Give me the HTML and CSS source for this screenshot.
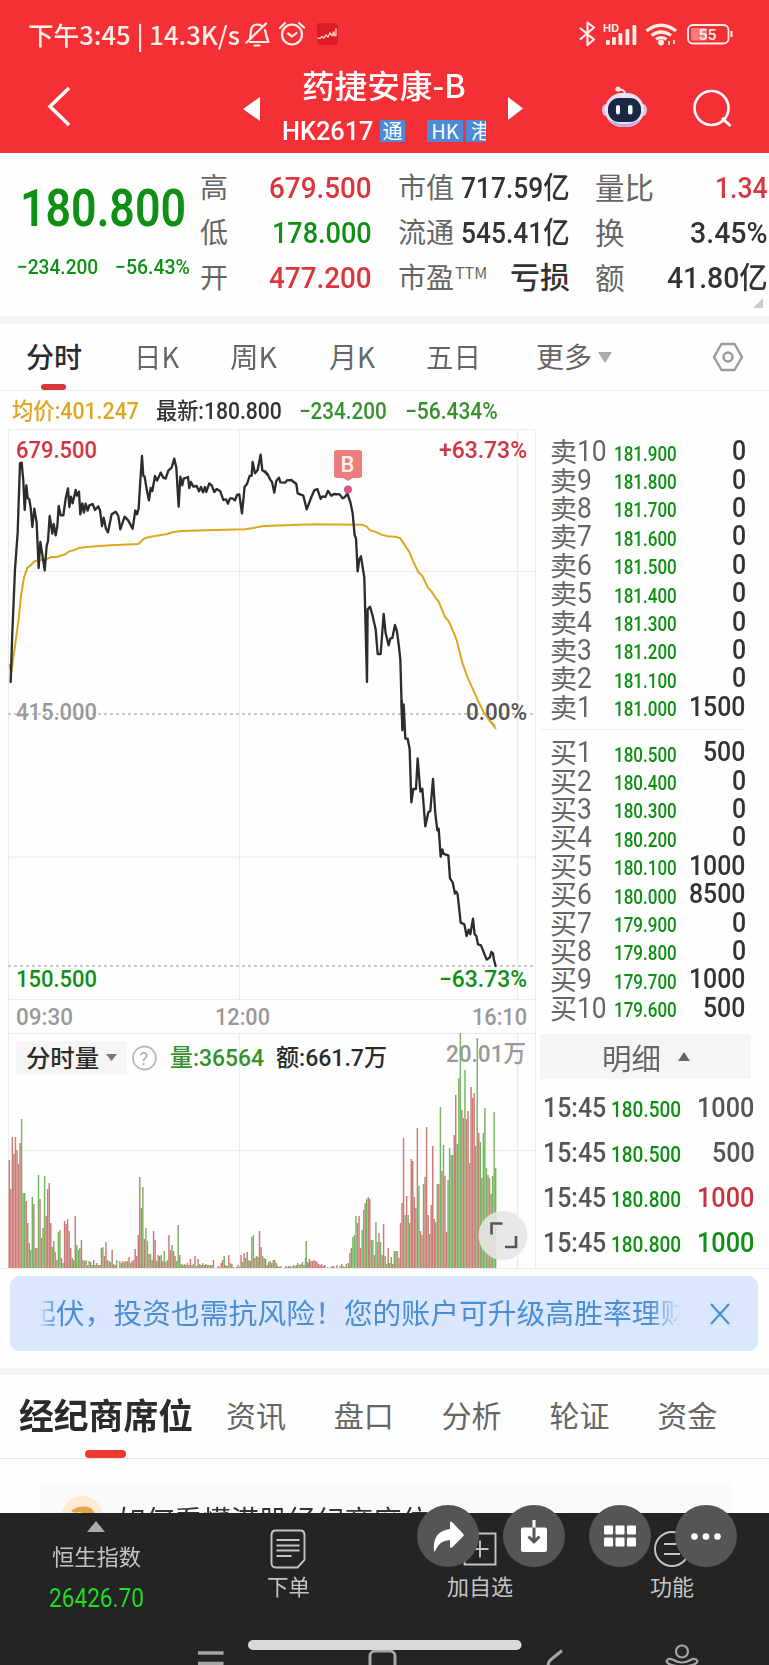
FILE: index.html
```html
<!DOCTYPE html>
<html lang="zh-CN">
<head>
<meta charset="utf-8">
<title>药捷安康-B HK2617</title>
<link rel="stylesheet" href="styles.css">
</head>
<body>
<div class="app">
  <header class="header">
    <div class="status">
      <span class="status-text" data-fit="212">下午3:45 | 14.3K/s</span>
      <svg class="status-left" width="100" height="30" viewBox="242 20 100 30">
        <g fill="none" stroke="#fff0e6" stroke-width="2.2" stroke-linecap="round" stroke-linejoin="round">
          <path d="M250 38.500l1-8q1-6 6.500-6 3 0 5 2M265 30l1.500 6.500 2 5.500H250M246.500 42.500l19.500-19M254.500 45.500h5"/>
          <circle cx="292" cy="34.500" r="10"/><path d="M288 33.500l4 3 4.500-3.500M280 28l5-5M299 23l5 4.500"/>
        </g>
        <rect x="317" y="23" width="21" height="22" rx="3" fill="#dd1c25"/>
        <path d="M317.500 38l2.500 .5 2-2 2 1.500 2-3 2 2 2-4 2 2.500 2-4v4l2 0v-7" fill="none" stroke="#ffd9cf" stroke-width="1.300"/>
      </svg>
      <svg class="status-right" width="160" height="30" viewBox="574 20 160 30">
        <g fill="none" stroke="#fff0e6" stroke-width="2.200" stroke-linejoin="round">
          <path d="M580 28l14 11.500-6.500 5.500V22.500l6.500 5L580 39.500"/>
        </g>
        <text x="603" y="31.500" class="hd" textLength="16">HD</text>
        <g fill="#fff0e6">
          <rect x="606" y="40" width="3.800" height="5" rx="1"/><rect x="612" y="37" width="3.800" height="8" rx="1"/><rect x="618.500" y="33" width="3.800" height="12" rx="1"/><rect x="625.500" y="29" width="3.800" height="16" rx="1"/><rect x="632.500" y="25" width="3.800" height="20" rx="1"/>
          <circle cx="661" cy="42.500" r="3"/>
        </g>
        <g fill="none" stroke="#fff0e6" stroke-width="3.200">
          <path d="M646.500 31q14.500-11.500 29.500 0M651.500 35.500q9.500-7 19.500 0M656 39.300q5-3.500 10.500 0"/>
          <path d="M669 41v4M674 40v4" stroke-width="1.600"/>
        </g>
        <rect x="688" y="25" width="40.500" height="18.500" rx="5" fill="none" stroke="#fff0e6" stroke-width="1.800"/>
        <path d="M731.500 31v6" stroke="#fff0e6" stroke-width="2"/>
        <rect x="691" y="28" width="16" height="12.500" rx="2" fill="#ff7a78"/>
        <text x="698.500" y="40" class="battery" textLength="18">55</text>
      </svg>
    </div>
    <div class="titlebar">
      <svg class="back" width="24" height="44" viewBox="0 0 24 44"><path d="M22 4L3 22.500 22 41" fill="none" stroke="#fff" stroke-width="3.500"/></svg>
      <svg class="prev" width="18" height="24" viewBox="0 0 18 24"><path d="M17 0v24L0 12z" fill="#fff"/></svg>
      <div class="title">
        <div class="name"><span data-fit="164">药捷安康-B</span></div>
        <div class="code"><span class="ticker" data-fit="91">HK2617</span><i class="tag tag-through">通</i><i class="tag tag-hk">HK</i><i class="tag tag-cut">港</i></div>
      </div>
      <svg class="next" width="15" height="23" viewBox="0 0 15 23"><path d="M0 0v23l15-11.500z" fill="#fff"/></svg>
      <svg class="robot" width="46" height="44" viewBox="601 84 46 44">
        <path d="M625 94q0-4-5-4.500" fill="none" stroke="#ffd9e0" stroke-width="2"/><circle cx="618" cy="89" r="2.600" fill="#ffe5ea"/>
        <ellipse cx="606" cy="110" rx="4" ry="6" fill="#d9c3e6"/><ellipse cx="643" cy="110" rx="4" ry="6" fill="#d9c3e6"/>
        <rect x="605" y="93" width="39" height="34" rx="17" fill="#e9e2f5"/>
        <path d="M608 119q16 10 33 0-6 8-16.500 8T608 119z" fill="#b9b0ea"/>
        <rect x="608" y="98" width="33" height="24" rx="11" fill="#1b2745"/>
        <rect x="616" y="105" width="4" height="9.500" rx="2" fill="#e9fff7"/><rect x="628" y="105" width="4.500" height="9.500" rx="2" fill="#e9fff7"/>
      </svg>
      <svg class="search" width="42" height="42" viewBox="692 88 42 42"><g fill="none" stroke="#fff" stroke-width="2.600"><circle cx="711.500" cy="108" r="17"/><path d="M722 118l8.500 8" stroke-width="3"/></g></svg>
    </div>
  </header>

  <section class="quote">
    <div class="last">
      <div class="last-price num" data-fit="166">180.800</div>
      <div class="last-change num"><span data-fit="81">−234.200</span><span data-fit="75">−56.43%</span></div>
    </div>
    <div class="stats">
      <span class="k">高</span><span class="v num red" data-fit="103">679.500</span>
      <span class="k">市值</span><span class="v num" data-fit="109">717.59亿</span>
      <span class="k">量比</span><span class="v num red" data-fit="53">1.34</span>
      <span class="k">低</span><span class="v num green" data-fit="100">178.000</span>
      <span class="k">流通</span><span class="v num" data-fit="109">545.41亿</span>
      <span class="k">换</span><span class="v num" data-fit="78">3.45%</span>
      <span class="k">开</span><span class="v num red" data-fit="103">477.200</span>
      <span class="k">市盈<sup>TTM</sup></span><span class="v num" data-fit="60">亏损</span>
      <span class="k">额</span><span class="v num" data-fit="101">41.80亿</span>
    </div>
    <svg class="expand" width="10" height="10" viewBox="0 0 10 10"><path d="M10 0v10H0z" fill="#ccc"/></svg>
  </section>

  <nav class="tabs">
    <span class="tab on" data-fit="56">分时</span><span class="tab" data-fit="45">日K</span><span class="tab" data-fit="47">周K</span><span class="tab" data-fit="46">月K</span><span class="tab" data-fit="55">五日</span><span class="tab" data-fit="56">更多</span>
    <i class="more"></i>
    <svg class="gear" width="32" height="30" viewBox="0 0 32 30"><g fill="none" stroke="#999" stroke-width="2.400" stroke-linejoin="round"><path d="M9.500 2h13L30 15l-7.500 13h-13L2 15z"/><circle cx="16" cy="15" r="4.500"/></g></svg>
  </nav>

  <div class="legend num">
    <span class="gold" data-fit="127">均价:401.247</span><span data-fit="126">最新:180.800</span><span class="lgreen" data-fit="88">−234.200</span><span class="lgreen" data-fit="93">−56.434%</span>
  </div>

  <main class="market">
    <svg class="chart" width="535" height="840" viewBox="0 428 535 840">
      <g class="grid">
        <path d="M8 428.500H535M8 570.500H535M8 856H535M8 998.500H535M8 1032.500H535M8 1149.500H535M8 1267.500H535M8.500 428V1267M239.500 428V998M239.500 1032V1267M517.500 428V998M517.500 1032V1267"/>
      </g>
      <path class="dash" d="M8 713H535M8 965H535"/>
      <g class="labels">
        <text x="16" y="457" textLength="81" class="fr">679.500</text>
        <text x="439" y="457" textLength="88" class="fr">+63.73%</text>
        <text x="16" y="718.500" textLength="81" class="fgray">415.000</text>
        <text x="466" y="718.500" textLength="61" class="fdark">0.00%</text>
        <text x="16" y="985.500" textLength="81" class="fg">150.500</text>
        <text x="439" y="985.500" textLength="88" class="fg">−63.73%</text>
        <text x="16" y="1024" textLength="57" class="fgray">09:30</text>
        <text x="215" y="1024" textLength="55" class="fgray">12:00</text>
        <text x="472" y="1024" textLength="55" class="fgray">16:10</text>
        <text x="446" y="1061" textLength="80" class="fgray">20.01万</text>
      </g>
      <g class="avg">
        <polyline transform="translate(0 425) scale(.3333)" points="28,715 34,740 45,660 56,580 63,510 72,455 82,425 92,418 104,406 120,402 138,400 155,393 170,393 196,385 206,377 222,372 240,365 270,362 330,358 415,354 432,338 448,333 502,324 520,318 545,315 620,313 735,310 760,306 790,300 810,300"/>
        <polyline transform="translate(265 425) scale(.3333)" points="0,300 60,298 150,295 290,296 305,302 315,313 330,317 350,326 368,331 390,332 406,337 416,352 433,378 444,405 460,438 472,450 489,485 500,497 512,516 520,525 540,573 552,587 575,642 592,710 608,755 624,790 640,826 656,858 672,882 690,900"/>
        <polyline transform="translate(350 700) scale(.3333)" points="417,57 438,84"/>
      </g>
      <g class="price">
        <polyline transform="translate(0 425) scale(.3333)" points="32,768 37,620 45,430 53,320 57,200 60,112 65,110 70,165 74,252 79,178 83,216 88,220 92,245 97,303 103,248 110,290 116,426 121,348 127,385 134,433 140,360 144,345 149,270 157,323 161,294 167,328 172,300 176,240 182,268 190,268 197,218 204,187 208,243 213,212 218,232 227,192 231,209 237,197 241,265 247,232 252,260 257,233 263,254 268,238 278,234 285,252 295,241 300,253 306,300 311,275 318,308 324,319 335,265 347,257 355,270 361,310 374,272 385,284 398,308 406,253 411,265 416,248 421,165 426,90 430,150 434,152 440,190 447,223 452,186 457,195 465,150 471,164 482,140 490,155 497,158 505,134 515,125 523,98 529,125 536,242 541,152 547,178 551,158 564,153 568,186 573,168 580,182 590,180 597,196 603,183 609,199 615,183 619,198 628,172 635,178 643,198 650,189 661,196 670,222 678,220 684,233 690,217 697,217 705,223 711,207 718,205 726,262 734,182 741,174 749,150 755,149 758,108 765,142 773,132 782,86 787,133 794,137 802,145"/>
        <polyline transform="translate(265 425) scale(.3333)" points="0,136 9,147 15,160 21,168 28,200 34,164 42,155 46,169 60,170 66,163 79,162 94,174 98,202 107,206 115,209 125,250 138,216 148,193 157,189 167,219 172,211 181,213 189,195 199,209 207,204 224,205 233,217 239,214 247,203 256,228 263,262 269,328 273,337 278,436 283,400 288,391 298,455 302,610 306,768 308,550 315,542 322,566 332,610 338,684 347,684 356,564 362,622 371,658 376,638 382,636 390,597 396,617 402,663 406,700 410,840 412,900"/>
        <polyline transform="translate(350 700) scale(.3333)" points="155,0 157,88 161,10 166,113 173,113 179,145 184,304 190,264 198,264 203,172 211,272 217,263 226,376 235,334 241,330 249,234 256,338 262,388 266,383 272,467 277,445 281,459 295,463 300,532 308,544 315,578 319,572 323,580 332,665 343,670 350,705 356,686 361,700 369,653 374,700 379,705 384,730 393,733 410,776 420,769 424,753 429,757 432,777 437,795"/>
      </g>
      <path d="M337 449h22q3 0 3 3v22q0 3-3 3h-6l-5 3-5-3h-6q-3 0-3-3v-22q0-3 3-3z" fill="#ee7b7e"/>
      <text x="340.500" y="471" class="buy">B</text>
      <circle cx="348" cy="488.500" r="4" fill="#d9558a"/>
      <g id="bars"></g>
      <rect x="16" y="1040" width="111" height="34" rx="2" fill="#f5f5f5"/>
      <text x="26" y="1065.500" textLength="73" class="vol">分时量</text>
      <path d="M106 1053h11l-5.500 7z" fill="#777"/>
      <circle cx="144.500" cy="1057" r="11.500" fill="none" stroke="#bbb" stroke-width="1.800"/>
      <text x="139.500" y="1063.500" class="help">?</text>
      <text x="170" y="1065" textLength="94" class="vol flg">量:36564</text>
      <text x="276" y="1065" textLength="111" class="vol">额:661.7万</text>
      <circle cx="503" cy="1234.500" r="24.500" fill="#e6e6e6" fill-opacity=".9"/>
      <path d="M491.500 1233.500v-11h11M505 1246h11v-11" fill="none" stroke="#555" stroke-width="2.600"/>
    </svg>
    <aside class="panel">
      <div class="book" id="asks"></div>
      <div class="book bids" id="bids"></div>
      <div class="detail"><span data-fit="59">明细</span><i></i></div>
      <div class="trades" id="trades"></div>
    </aside>
  </main>

  <div class="banner">
    <div class="marquee"><span>起伏，投资也需抗风险！您的账户可升级高胜率理财</span></div>
    <svg width="20" height="22" viewBox="0 0 20 22"><path d="M1 1l18 20M19 1L1 21" stroke="#4a90d9" stroke-width="2.200"/></svg>
  </div>

  <nav class="subtabs">
    <b data-fit="174">经纪商席位</b><span>资讯</span><span>盘口</span><span>分析</span><span>轮证</span><span>资金</span>
  </nav>

  <div class="guide">
    <div class="card">
      <svg width="42" height="42" viewBox="0 0 42 42"><circle cx="21" cy="21" r="21" fill="#fdebd3"/><path d="M10 15q9-7 20-3 6 5 2 12H22q2-6-3-8-5 2-9-1z" fill="#e3a548"/></svg>
      <span data-fit="313">如何看懂港股经纪商席位</span>
    </div>
  </div>

  <footer class="footer">
    <div class="cell index"><i class="up"></i><span class="lbl" data-fit="89">恒生指数</span><span class="idx" data-fit="95">26426.70</span></div>
    <div class="cell">
      <svg width="36" height="40" viewBox="0 0 36 40"><g fill="none" stroke="#c4c4c4" stroke-width="1.900"><path d="M6 1.500h24q4.500 0 4.500 4.500v25l-7 7.500H6Q1.500 38.500 1.500 34V6Q1.500 1.500 6 1.500z"/><path d="M6.500 11h23M6.500 16.500h23M6.500 21.500h23M6.500 27h15"/></g></svg>
      <span class="lbl" data-fit="43">下单</span></div>
    <div class="cell">
      <svg width="36" height="40" viewBox="0 0 36 40"><path d="M2.500 4.500h31v31h-31zM18 11.500v17M9.500 20h17" fill="none" stroke="#c4c4c4" stroke-width="1.900"/></svg>
      <span class="lbl" data-fit="66">加自选</span></div>
    <div class="cell">
      <svg width="36" height="40" viewBox="0 0 36 40"><g fill="none" stroke="#c4c4c4" stroke-width="1.900"><circle cx="18" cy="20" r="17"/><path d="M10 15h16M10 25h16"/></g></svg>
      <span class="lbl" data-fit="44">功能</span></div>
    <svg class="navkeys" width="769" height="26" viewBox="0 1639 769 26">
      <g fill="none" stroke="#a5a5a5" stroke-width="3">
        <path d="M198 1652h25.500M198 1662.500h25.500" stroke-width="3.600"/>
        <rect x="370" y="1650" width="25" height="25" rx="5"/>
        <path d="M562 1649.500l-11.500 9.500q-4 3.500-1 7"/>
        <g stroke-width="2.200"><circle cx="682" cy="1650.500" r="6"/><path d="M674 1670l3-5q-10-1-10.500-5 2-3.500 7-1 4 2.500 8.500 2.500t8.500-2.500q5-2.500 7 1-.5 4-10.500 5l3 5"/></g>
      </g>
      <rect x="248" y="1639" width="273.500" height="10" rx="5" fill="#d9d9d9"/>
    </svg>
    <div class="floating">
      <svg viewBox="0 0 62 62"><circle cx="31" cy="31" r="31"/><path fill="#fff" d="M33 17.500q1-2 2.500 0L46 28.500q1.500 1.500 0 3L35.500 42q-2.500 2-2.500-.5v-6.500q-10 0-15 11-.5 1.500-1 0Q15 26.500 33 24z"/></svg>
      <svg viewBox="0 0 62 62"><circle cx="31" cy="31" r="31"/><path fill="#fff" d="M20 22.500h9.500V15h3v7.500H42q2 0 2 2V45q0 2-2 2H20q-2 0-2-2V24.500q0-2 2-2z"/><path d="M31 22.500V37M25.500 31.500L31 37l5.500-5.500" fill="none" stroke="#555557" stroke-width="3"/></svg>
      <svg viewBox="0 0 62 62"><circle cx="31" cy="31" r="31"/><g fill="#fff"><rect x="15" y="20.500" width="9" height="9" rx="1"/><rect x="26.500" y="20.500" width="9" height="9" rx="1"/><rect x="38" y="20.500" width="9" height="9" rx="1"/><rect x="15" y="32.500" width="9" height="9" rx="1"/><rect x="26.500" y="32.500" width="9" height="9" rx="1"/><rect x="38" y="32.500" width="9" height="9" rx="1"/></g></svg>
      <svg viewBox="0 0 62 62"><circle cx="31" cy="31" r="31"/><g fill="#fff"><circle cx="19.500" cy="31.500" r="3.300"/><circle cx="31" cy="31.500" r="3.300"/><circle cx="42.500" cy="31.500" r="3.300"/></g></svg>
    </div>
  </footer>
</div>
<script src="main.js"></script>
</body>
</html>
```
FILE: styles.css
```css
* { box-sizing: border-box; }
body { margin: 0; background: #fff; font-family: "Noto Sans CJK SC", sans-serif; color: #333; }
i { font-style: normal; }
svg { display: block; flex: none; }
.app { width: 769px; height: 1665px; overflow: hidden; background: #fefefe; display: flex; flex-direction: column; }
.app > * { flex: none; }
.num { font-family: Roboto, "Noto Sans CJK SC", sans-serif; font-weight: 500; }
.fitted { display: inline-block; white-space: nowrap; overflow: visible; flex: none; text-align: left; }
.fitted > .inner { display: inline-block; transform-origin: 0 50%; white-space: nowrap; }
.red { color: #d9363e; }
.green { color: #0f8f14; }
.lgreen { color: #35912c; }
.gold { color: #dfa520; }

.header { height: 153px; background: #f52f36; color: #fff; }
.status { height: 70px; display: flex; align-items: center; padding-left: 28px; color: #fff0e6; }
.status-text { font-size: 25px; line-height: 30px; margin-top: -3px; font-weight: 500; }
.status-left { margin-left: 2px; }
.status-right { margin-left: 232px; }
.hd { font: 700 10px Inter, sans-serif; fill: #fff0e6; }
.battery { font: 500 15px Roboto, sans-serif; fill: #fff0e6; }
.titlebar { height: 83px; display: flex; align-items: flex-start; }
.back { margin: 14px 0 0 47px; }
.prev { margin: 27px 0 0 172px; }
.title { width: 204px; margin-left: 21px; }
.name { height: 34px; line-height: 34px; font-size: 32px; font-weight: 500; padding-left: 20px; margin-top: -3px; }
.code { display: flex; height: 26px; align-items: center; margin-top: 17px; overflow: hidden; }
.ticker { font: 500 25px/26px Roboto, sans-serif; padding-top: 1px; }
.tag { background: #4b8ad6; height: 22px; font-size: 20px; line-height: 21px; text-align: center; overflow: hidden; white-space: nowrap; flex: none; }
.tag-through { width: 25px; margin-left: 7px; }
.tag-hk { width: 36px; margin-left: 22px; }
.tag-cut { width: 20px; margin-left: 3px; text-align: left; padding-left: 5px; }
.next { margin: 27px 0 0 22px; }
.robot { margin: 14px 0 0 78px; }
.search { margin: 18px 0 0 45px; }

.quote { height: 171px; display: flex; border-bottom: 8px solid #f4f4f4; position: relative; }
.last { width: 200px; padding-top: 26px; }
.last-price { font-size: 52px; line-height: 60px; margin-left: 20px; color: #0f8f14; font-weight: 600; }
.last-change { display: flex; gap: 17px; margin: 13px 0 0 17px; font-size: 21px; line-height: 30px; color: #0f8f14; }
.stats { display: grid; grid-template-columns: 60px 112px 116px 82px 78px 120px; grid-auto-rows: 45px; padding-top: 12px; align-items: center; flex: none; width: 569px; }
.stats .k { font-size: 28px; line-height: 45px; color: #666; white-space: nowrap; margin-top: -2px; }
.stats .k:nth-child(6n+3) { padding-left: 26px; }
.stats .k:nth-child(6n+5) { padding-left: 25px; font-size: 29.500px; }
.stats .v { font-size: 30px; line-height: 45px; justify-self: end; }
.stats sup { font: 400 16px "Noto Sans CJK SC", sans-serif; line-height: 0; vertical-align: 9px; margin-left: 1px; }
.expand { position: absolute; right: 6px; bottom: 8px; }

.tabs { height: 67px; border-bottom: 1px solid #efefef; display: flex; align-items: center; padding-left: 26px; font-size: 28px; color: #666; position: relative; }
.tab { line-height: 60px; margin-right: 53px; margin-top: -2px; }
.tab:nth-child(2) { margin-left: -1px; margin-right: 54px; }
.tab:nth-child(3) { margin-left: -3px; margin-right: 52px; }
.tab:nth-child(4) { margin-right: 51px; }
.tab:nth-child(5) { margin-right: 55px; }
.tab:nth-child(6) { margin-right: 6px; }
.tab.on { color: #2b2b2b; font-weight: 500; }
.tab.on::after { content: ""; position: absolute; left: 41px; bottom: 0; width: 25px; height: 6px; border-radius: 3px; background: #d9343a; }
.more { border: 7px solid transparent; border-top: 11px solid #aaa; border-bottom: 0; }
.gear { margin-left: auto; margin-right: 25px; }
.legend { height: 38px; display: flex; align-items: center; padding: 3px 0 0 12px; font-size: 23px; line-height: 38px; }
.legend > :nth-child(2) { margin-left: 17px; }
.legend > :nth-child(3) { margin-left: 17px; }
.legend > :nth-child(4) { margin-left: 18px; }

.market { height: 840px; display: flex; border-bottom: 1px solid #eee; }
.grid path { fill: none; stroke: #ececef; stroke-width: 1.200; }
.dash { fill: none; stroke: #b5b5b5; stroke-width: 1.300; stroke-dasharray: 3 3; }
.avg polyline { fill: none; stroke: #dda81f; stroke-width: 6; stroke-linejoin: round; }
.price polyline { fill: none; stroke: #2c2c2c; stroke-width: 7; stroke-linejoin: round; stroke-linecap: round; }
.labels text { font: 500 24px Roboto, "Noto Sans CJK SC", sans-serif; }
.fr { fill: #cf3542; }
.fg { fill: #0f8f14; }
.fgray { fill: #999; }
.fdark { fill: #555; }
.buy { font: 500 22px Roboto, sans-serif; fill: #fff3ea; }
.vol { font: 500 24px Roboto, "Noto Sans CJK SC", sans-serif; fill: #2b2b2b; }
.vol.flg { fill: #35912c; }
.help { font: 400 18px Roboto, sans-serif; fill: #aaa; }
.bar-up { stroke: #cb7a75; }
.bar-down { stroke: #74b562; }

.panel { width: 234px; border-left: 1px solid #eee; padding: 8px 0 0 4px; }
.book { border-bottom: 1px solid #eee; width: 206px; height: 293px; }
.bids { margin-top: 8px; border: 0; height: 296px; }
.row { display: flex; align-items: center; height: 28.400px; padding-left: 10px; white-space: nowrap; }
.row .lbl { width: 64px; display: flex; align-items: center; color: #666; font-size: 27px; line-height: 28px; }
.row .lbl em { font: 400 30px/28px Roboto, sans-serif; transform: scaleX(.88); transform-origin: 0 50%; }
.row .px { font-size: 20px; line-height: 28px; color: #0f8f14; padding-top: 5px; }
.row .qty { font-size: 28px; line-height: 28px; margin-left: auto; }
.detail { width: 211px; height: 45px; background: #f5f5f5; display: flex; align-items: center; padding-left: 62px; font-size: 29px; line-height: 42px; color: #666; }
.detail i { border: 6px solid transparent; border-bottom: 9px solid #666; border-top: 0; margin-left: 17px; }
.trades { padding-top: 6px; width: 215px; }
.trade { display: flex; height: 45px; align-items: center; padding-left: 3px; color: #555; line-height: 45px; }
.trade .t, .trade .q { font-size: 28.500px; }
.trade .p { font-size: 22px; color: #0f8f14; margin-left: 5px; padding-top: 3px; }
.trade .q { margin-left: auto; }
.trade .q.red { color: #c9343c; }
.trade .q.green { color: #0f8f14; }

.banner { margin: 7px 11px 0 10px; height: 75px; border-radius: 9px; background: linear-gradient(#dbe7fe 60%, #d7e9fa); display: flex; align-items: center; }
.marquee { margin-left: 28px; width: 648px; overflow: hidden; white-space: nowrap; color: #4a8fd4; font-size: 28.800px; line-height: 71px; height: 75px; -webkit-mask-image: linear-gradient(90deg, transparent, #000 20px, #000 610px, transparent 644px); mask-image: linear-gradient(90deg, transparent, #000 20px, #000 610px, transparent 644px); }
.marquee span { margin-left: -11px; }
.banner svg { margin-left: 24px; }

.subtabs { margin-top: 17px; height: 91px; border-top: 7px solid #f3f3f3; border-bottom: 1px solid #e2e2e2; display: flex; align-items: center; padding: 0 0 6px 19px; font-size: 30px; line-height: 76px; color: #666; position: relative; }
.subtabs b { font-size: 35px; color: #2b2b2b; margin-right: 33px; }
.subtabs span:not(.inner) { width: 107.800px; flex: none; }
.subtabs::after { content: ""; position: absolute; left: 85px; bottom: 0; width: 41px; height: 8px; border-radius: 4px; background: #ee3a30; }
.guide { height: 54px; padding: 25px 38px 0 39px; overflow: hidden; }
.card { height: 90px; background: #fafafc; display: flex; padding: 12px 0 0 22px; }
.card > span { margin-left: 14px; font-size: 28px; line-height: 46px; }

.footer { height: 153px; background: #242424; display: grid; grid-template-columns: repeat(4, 192px); position: relative; color: #c4c4c4; }
.cell { display: flex; flex-direction: column; align-items: center; padding-top: 16px; }
.cell .lbl { font-size: 22px; line-height: 30px; margin-top: 1px; }
.index { padding-top: 8px; }
.index .lbl { margin-top: 8px; }
.idx { font: 400 25px/30px Roboto, sans-serif; color: #22dd22; margin-top: 14px; }
.up { border: 9px solid transparent; border-top: 0; border-bottom: 11px solid #aaa; }
.navkeys { position: absolute; left: 0; bottom: 0; }
.floating { position: absolute; left: 417px; top: -8px; display: flex; gap: 24px; }
.floating svg { width: 62px; height: 62px; fill: #555557; }
```
FILE: main.js
```js
const div = (cls, html) => `<div class="${cls}">${html}</div>`;
const row = (side, n, price, qty) => div('row',
  `<span class="lbl">${side}<em>${n}</em></span><span class="px num" data-fit="63">${price}</span>` +
  `<span class="qty num" data-fit="${String(qty).length * 14.2}">${qty}</span>`);

const askQty = [0, 0, 0, 0, 0, 0, 0, 0, 0, 1500];
const bidQty = [500, 0, 0, 0, 1000, 8500, 0, 0, 1000, 500];
document.getElementById('asks').innerHTML =
  askQty.map((q, i) => row('卖', 10 - i, (181.9 - i / 10).toFixed(3), q)).join('');
document.getElementById('bids').innerHTML =
  bidQty.map((q, i) => row('买', i + 1, (180.5 - i / 10).toFixed(3), q)).join('');

const trades = [['180.500', 1000, ''], ['180.500', 500, ''], ['180.800', 1000, 'red'], ['180.800', 1000, 'green']];
document.getElementById('trades').innerHTML = trades.map(([p, q, c]) => div('trade',
  `<span class="t num" data-fit="63">15:45</span><span class="p num" data-fit="70">${p}</span>` +
  `<span class="q num ${c}" data-fit="${String(q).length * 14.4}">${q}</span>`)).join('');

// Per-minute volume: positive = up, negative = down.
const series = [
  { x: 9.3, v: [108,79,131,114,131,118,104,125,-149,-75,-75,67,-45,25,-18,-71,64,-20,20,-93,69,30,-40,-92,52,79,85,45,-21,27,-16,8,-36,-38,10,-5,47,44,49,37,20,-10,8,52,-23,-18,20,28,-8,7,-8,3,-7,6,-3,8,-3,5,-3,3,20,-21,12,26,-8,7,-6,18,-4,3,-8,0,7,-5,7,-6,7,-7,11,-5,7,-8,19,12,33,91,60,-81,29,-40,-27,14,-14,8,37,28,-7,13,12,-13,7,-17,6,-8,33,18,-23,17,12,-7,-43,13,-4,3,-4,3,-5,3,9,-3,4,12,-2,9,-4,3,-5,3,-4,3,-3,3,-3,8,0,0,2,-1,5,8,-12,3,-2,13,-5,4,1,0,-1,3,-1,13,-6,15,-10,16,-8,7,-31,-33,10,-12,11,37,21,-12,10,-9,3,6,-7,5,-8,8,-5,2,1,2,0,0,2,-1,2,-2,1,-3,2,-3,5,-3,4,-6,3,-10,6,-5] },
  { x: 306.3, v: [-27,4,9,7,7,8,7,6,4,3,4,2,3,0,1,0,1,-2,2,0,3,0,-2,4,-2,1,-4] },
  { x: 348.3, v: [5,-15,20,-31,-33,-52,45,52,20,-38,-58,65,-69,71,69,-28,-28,13,-46,-26,35,-26,13,44,-12,-4,20,5,-11,4,-17,17,-17,10,45,65,130,-53,72,-53,45,109,107,71,-60,140,-82,37,33,-84,91,141,53,-34,63,122,49,-46,-84,84,-161,97,-123,92,36,-88,-120,-113,-113,133,173,-124,-190,-235,158,150,-198,149,157,-105,181,170,175,-122,-230,135,-126,90,-135,-160,-100,93,-90,74,-92,-156,-100] }
];
document.getElementById('bars').innerHTML = series.map(s => s.v.map((v, i) => {
  if (!v) return '';
  const x = (s.x + i * 1.535).toFixed(2);
  return `<path class="${v > 0 ? 'bar-up' : 'bar-down'}" stroke-width="1.45" d="M${x} 1267V${1267 - Math.abs(v)}"/>`;
}).join('')).join('');

document.querySelectorAll('[data-fit]').forEach(el => {
  const w = Number(el.dataset.fit);
  el.innerHTML = `<span class="inner">${el.innerHTML}</span>`;
  el.classList.add('fitted');
  const inner = el.firstElementChild;
  inner.style.transform = `scaleX(${w / inner.offsetWidth})`;
  el.style.width = `${w}px`;
});
document.querySelectorAll('svg text[textLength]').forEach(t => t.setAttribute('lengthAdjust', 'spacingAndGlyphs'));
```
